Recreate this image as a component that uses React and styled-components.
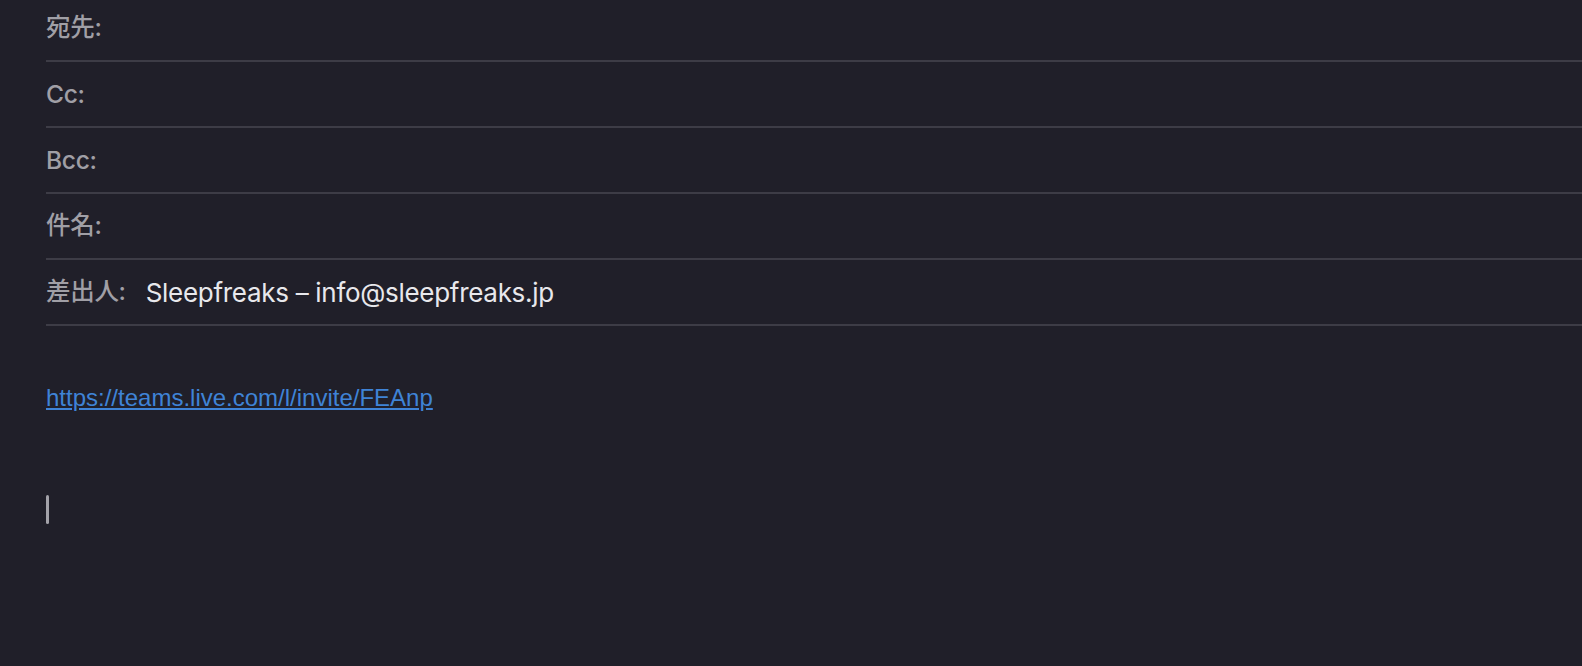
import React from 'react';
import styled, { createGlobalStyle } from 'styled-components';

const GlobalStyle = createGlobalStyle`
  html, body {
    margin: 0;
    padding: 0;
    background: #201f29;
  }
  body {
    font-family: Inter, "Noto Sans CJK JP", sans-serif;
    -webkit-font-smoothing: antialiased;
  }
`;

const Window = styled.div`
  width: 1582px;
  height: 666px;
  overflow: hidden;
  background: #201f29;
  padding-left: 46px;
  box-sizing: border-box;
`;

const Fields = styled.div`
  display: flex;
  flex-direction: column;
`;

const Row = styled.div`
  display: flex;
  align-items: center;
  gap: 20px;
  height: 66px;
  box-sizing: border-box;
  border-bottom: 2px solid #3d3c46;

  &:first-child {
    height: 62px;
    padding-bottom: 4px;
  }
`;

// CJK glyphs sit a little lower in Noto, so lift them to line up with the Latin labels
const Label = styled.span`
  font-family: Inter, "Noto Sans CJK JP", sans-serif;
  font-size: 24.5px;
  font-weight: 500;
  color: #a09fa6;
  letter-spacing: -0.3px;
  padding-bottom: ${p => (p.$cjk ? '6px' : '0')};
`;

const Value = styled.span`
  font-family: Inter, "Noto Sans CJK JP", sans-serif;
  font-size: 26px;
  color: #e8e8ec;
  letter-spacing: -0.3px;
  padding-top: 1px;
`;

const Body = styled.div`
  display: flex;
  flex-direction: column;
  align-items: flex-start;
  padding-top: 58px;
`;

const Link = styled.a`
  font-family: "Liberation Sans", Arial, sans-serif;
  font-size: 24px;
  line-height: 28px;
  color: #3f83d6;
  text-decoration: underline;
  text-underline-offset: 2px;
`;

const Caret = styled.span`
  display: block;
  width: 3px;
  height: 29px;
  margin-top: 83px;
  border-radius: 2px;
  background: #a3a2a9;
`;

const fields = [
  { label: '宛先:', cjk: true },
  { label: 'Cc:' },
  { label: 'Bcc:' },
  { label: '件名:', cjk: true },
  { label: '差出人:', cjk: true, value: 'Sleepfreaks – info@sleepfreaks.jp' },
];

const App = () => (
  <>
    <GlobalStyle />
    <Window>
      <Fields>
        {fields.map(f => (
          <Row key={f.label}>
            <Label $cjk={f.cjk}>{f.label}</Label>
            {f.value && <Value>{f.value}</Value>}
          </Row>
        ))}
      </Fields>
      <Body>
        <Link href="#">https://teams.live.com/l/invite/FEAnp</Link>
        <Caret />
      </Body>
    </Window>
  </>
);

export default App;
